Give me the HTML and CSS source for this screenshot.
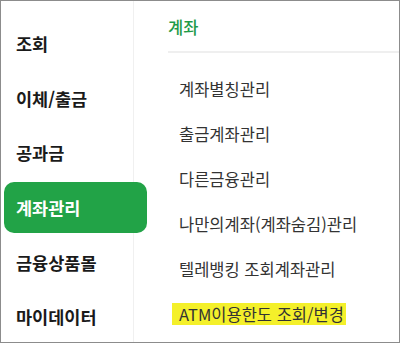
FILE: index.html
```html
<!DOCTYPE html>
<html lang="ko">
<head>
<meta charset="utf-8">
<link rel="stylesheet" href="styles.css">
</head>
<body>
<div class="frame">
  <nav class="nav">
    <div class="nav-item">조회</div>
    <div class="nav-item">이체/출금</div>
    <div class="nav-item">공과금</div>
    <div class="nav-item active">계좌관리</div>
    <div class="nav-item">금융상품몰</div>
    <div class="nav-item">마이데이터</div>
  </nav>
  <section class="panel">
    <div class="panel-head"><span class="panel-title">계좌</span></div>
    <ul class="menu">
      <li class="menu-item">계좌별칭관리</li>
      <li class="menu-item">출금계좌관리</li>
      <li class="menu-item">다른금융관리</li>
      <li class="menu-item">나만의계좌(계좌숨김)관리</li>
      <li class="menu-item">텔레뱅킹 조회계좌관리</li>
      <li class="menu-item"><span class="mark">ATM이용한도 조회/변경</span></li>
    </ul>
  </section>
</div>
</body>
</html>
```
FILE: styles.css
```css
html, body {
  margin: 0;
  padding: 0;
  background: #fff;
}
body {
  font-family: "Noto Sans CJK KR", "Noto Sans", sans-serif;
}
.frame {
  width: 400px;
  height: 343px;
  box-sizing: border-box;
  border: 1px solid #8c8c8c;
  display: flex;
  overflow: hidden;
}
.nav {
  width: 132px;
  flex: none;
  border-right: 1px solid #f0f0f0;
  padding-top: 17px;
  display: flex;
  flex-direction: column;
  gap: 4px;
  position: relative;
  z-index: 1;
}
.nav-item {
  height: 52px;
  display: flex;
  align-items: center;
  padding-left: 15px;
  font-size: 17.5px;
  font-weight: 700;
  color: #1a1a1a;
}
.nav-item.active {
  margin-left: 3px;
  margin-right: -14px;
  padding-left: 12px;
  background: #22a347;
  color: #fff;
  border-radius: 10px;
}
.panel {
  flex: 1;
}
.panel-head {
  margin-left: 34px;
  height: 48px;
  padding-top: 2px;
  border-bottom: 2px solid #efefef;
  display: flex;
  align-items: center;
}
.panel-title {
  font-size: 16.5px;
  font-weight: 500;
  color: #1f9b48;
}
.menu {
  list-style: none;
  margin: 13px 0 0;
  padding: 0 0 0 45px;
}
.menu-item {
  height: 45px;
  display: flex;
  align-items: center;
  font-size: 16.5px;
  color: #333;
  white-space: nowrap;
}
.mark {
  background: #f4f02a;
  margin-left: -7px;
  padding: 1px 2px 1px 7px;
  line-height: 20px;
}
```
